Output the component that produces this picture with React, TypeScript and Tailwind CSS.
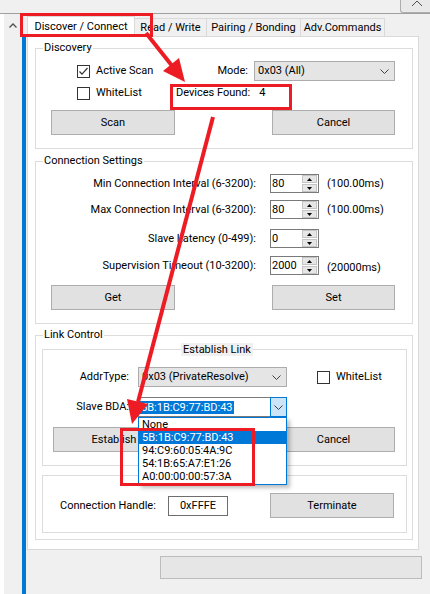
import React from "react";

function Chevron() {
  return (
    <svg width="9" height="5" viewBox="0 0 9 5">
      <polyline points="0.5,0.5 4.5,4.5 8.5,0.5" fill="none" stroke="#404040" strokeWidth="1" />
    </svg>
  );
}

function Checkbox({ checked }: { checked?: boolean }) {
  return (
    <div className="w-[13px] h-[13px] border border-[#333333] bg-white flex items-center justify-center shrink-0">
      {checked && (
        <svg width="11" height="11" viewBox="0 0 11 11">
          <polyline points="1.5,5.5 4,8.2 9.5,2" fill="none" stroke="#333333" strokeWidth="1.2" />
        </svg>
      )}
    </div>
  );
}

function Button({ label, className }: { label: string; className: string }) {
  return (
    <div className={`h-[25px] bg-[#e1e1e1] border border-[#adadad] flex items-center justify-center shrink-0 ${className}`}>
      {label}
    </div>
  );
}

function Combo({ text, className }: { text: string; className: string }) {
  return (
    <div className={`h-[20px] bg-[#e5e5e5] border border-[#acacac] flex items-center pl-[3px] pr-[5px] shrink-0 ${className}`}>
      <span className="flex-1 truncate">{text}</span>
      <Chevron />
    </div>
  );
}

function Spinner({ value }: { value: string }) {
  return (
    <div className="w-[49px] h-[19px] border border-[#7a7a7a] bg-white flex items-center shrink-0">
      <span className="flex-1 pl-[1px] leading-[17px]">{value}</span>
      <div className="w-[15px] h-[17px] mr-[1px] flex flex-col">
        <div className="h-[8px] mb-[1px] bg-[#e6e6e6] border border-[#c4c4c4] flex items-center justify-center">
          <svg width="5" height="3" viewBox="0 0 5 3">
            <polygon points="0,3 2.5,0 5,3" fill="#000" />
          </svg>
        </div>
        <div className="h-[8px] bg-[#e6e6e6] border border-[#c4c4c4] flex items-center justify-center">
          <svg width="5" height="3" viewBox="0 0 5 3">
            <polygon points="0,0 5,0 2.5,3" fill="#000" />
          </svg>
        </div>
      </div>
    </div>
  );
}

function SpinRow({ label, value, unit, mt, unitClass }: { label: string; value: string; unit?: string; mt: string; unitClass?: string }) {
  return (
    <div className={`h-[19px] flex items-center ${mt}`}>
      <span className="w-[220px] text-right shrink-0 whitespace-nowrap">{label}</span>
      <div className="ml-[14px]">
        <Spinner value={value} />
      </div>
      {unit && <span className={`ml-[8px] whitespace-nowrap ${unitClass ?? ""}`}>{unit}</span>}
    </div>
  );
}

export default function App() {
  const items = ["None", "5B:1B:C9:77:BD:43", "94:C9:60:05:4A:9C", "54:1B:65:A7:E1:26", "A0:00:00:00:57:3A"];
  return (
    <div className="relative w-[430px] h-[594px] overflow-hidden bg-[#f0f0f0] text-black text-[11px] leading-[14px] font-['Roboto','Liberation_Sans',sans-serif]">
      {/* top strip */}
      <div className="h-[14px] border-b border-[#a0a0a0] flex justify-end">
        <div className="w-[30px] h-[13px] border-l border-b border-[#adadad] rounded-bl-[3px] bg-[#e9e9e9] flex justify-center">
          <svg width="12" height="7" viewBox="0 0 12 7" className="ml-[2px]">
            <polyline points="1,6 6,1 11,6" fill="none" stroke="#505050" strokeWidth="1" />
          </svg>
        </div>
      </div>

      <div className="flex h-[580px]">
        <div className="w-[4px] bg-white" />
        <div className="w-[17px] flex justify-center pt-[9px]">
          <svg width="8" height="5" viewBox="0 0 8 5">
            <polyline points="0.5,4.5 4,1 7.5,4.5" fill="none" stroke="#505050" strokeWidth="1.3" />
          </svg>
        </div>
        <div className="w-[6px] pl-[1px] flex flex-col">
          <div className="h-[23px]" />
          <div className="flex-1 w-[4px] bg-[#0078d7]" />
        </div>

        <div className="w-[403px] flex flex-col">
          {/* tabs */}
          <div className="h-[22px] flex items-end">
            <div className="relative z-10 -mb-px w-[108px] h-[21px] bg-white border border-b-0 border-[#d9d9d9] flex items-center justify-center pb-[1px] whitespace-nowrap">
              Discover / Connect
            </div>
            <div className="w-[72px] h-[18px] bg-[#f0f0f0] border-t border-r border-[#d9d9d9] flex items-center justify-center whitespace-nowrap">
              Read / Write
            </div>
            <div className="w-[94px] h-[18px] bg-[#f0f0f0] border-t border-r border-[#d9d9d9] flex items-center justify-center whitespace-nowrap">
              Pairing / Bonding
            </div>
            <div className="w-[84px] h-[18px] bg-[#f0f0f0] border-t border-r border-[#d9d9d9] flex items-center justify-center whitespace-nowrap">
              Adv.Commands
            </div>
          </div>

          {/* panel */}
          <div className="w-[392px] bg-white border border-[#d9d9d9] pt-[4px] pb-[9px]">
            {/* Discovery */}
            <fieldset className="ml-[7px] mr-[5px] border border-[#dcdcdc] pb-[13px] min-w-0">
              <legend className="ml-[7px] px-[1px] leading-[14px]">Discovery</legend>
              <div className="mt-[6px] h-[20px] flex items-center">
                <div className="w-[212px] pl-[41px] flex items-center shrink-0">
                  <Checkbox checked />
                  <span className="ml-[6px]">Active Scan</span>
                  <span className="ml-auto">Mode:</span>
                </div>
                <Combo text="0x03 (All)" className="ml-[6px] w-[141px]" />
              </div>
              <div className="mt-[3px] h-[18px] flex items-center">
                <div className="w-[140px] pl-[41px] flex items-center shrink-0">
                  <Checkbox />
                  <span className="ml-[6px]">WhiteList</span>
                </div>
                <span>Devices Found:</span>
                <span className="ml-[9px]">4</span>
              </div>
              <div className="mt-[8px] flex">
                <Button label="Scan" className="ml-[15px] w-[124px]" />
                <Button label="Cancel" className="ml-[97px] w-[123px]" />
              </div>
            </fieldset>

            {/* Connection Settings */}
            <fieldset className="mt-[5px] ml-[7px] mr-[5px] border border-[#dcdcdc] pb-[13px] min-w-0">
              <legend className="ml-[7px] px-[1px] leading-[14px]">Connection Settings</legend>
              <SpinRow label="Min Connection Interval (6-3200):" value="80" unit="(100.00ms)" mt="mt-[6px]" />
              <SpinRow label="Max Connection Interval (6-3200):" value="80" unit="(100.00ms)" mt="mt-[7px]" />
              <SpinRow label="Slave Latency (0-499):" value="0" mt="mt-[10px]" />
              <SpinRow label="Supervision Timeout (10-3200):" value="2000" unit="(20000ms)" mt="mt-[8px]" unitClass="mt-[4px]" />
              <div className="mt-[10px] flex">
                <Button label="Get" className="ml-[15px] w-[124px]" />
                <Button label="Set" className="ml-[97px] w-[123px]" />
              </div>
            </fieldset>

            {/* Link Control */}
            <fieldset className="mt-[4px] ml-[7px] mr-[5px] border border-[#dcdcdc] pb-[6px] min-w-0">
              <legend className="ml-[7px] px-[1px] leading-[14px]">Link Control</legend>

              <fieldset className="mt-[1px] ml-[6px] mr-[5px] border border-[#dcdcdc] pb-[13px] min-w-0">
                <legend className="ml-[138px] bg-[#f0f0f0] leading-[13px]">
                  <span className="inline-block w-[72px] text-center">Establish Link</span>
                </legend>
                <div className="mt-[11px] h-[20px] flex items-center">
                  <span className="w-[86px] text-right shrink-0">AddrType:</span>
                  <Combo text="0x03 (PrivateResolve)" className="ml-[9px] w-[149px]" />
                  <div className="ml-[30px]">
                    <Checkbox />
                  </div>
                  <span className="ml-[6px]">WhiteList</span>
                </div>
                <div className="mt-[10px] h-[20px] flex items-center">
                  <span className="w-[86px] text-right shrink-0">Slave BDA:</span>
                  <div className="relative ml-[9px] w-[149px] h-[20px] border border-[#7a7a7a] bg-white flex items-center shrink-0">
                    <div className="flex-1 pl-[1px] flex items-center">
                      <span className="bg-[#0078d7] text-white leading-[13px] px-[1px]">5B:1B:C9:77:BD:43</span>
                    </div>
                    <div className="w-[17px] h-[20px] -mr-px border border-[#0078d7] bg-[#cce4f7] flex items-center justify-center">
                      <Chevron />
                    </div>
                    <div className="absolute left-[-1px] top-[19px] z-20 w-[149px] bg-white border border-[#0078d7] pb-[1px] shadow-[3px_3px_4px_rgba(0,0,0,0.25)]">
                      {items.map((it, i) => (
                        <div
                          key={it}
                          className={
                            i === 1
                              ? "h-[13px] leading-[13px] pl-[3px] bg-[#0078d7] text-white"
                              : "h-[13px] leading-[13px] pl-[3px]"
                          }
                        >
                          {it}
                        </div>
                      ))}
                    </div>
                  </div>
                </div>
                <div className="mt-[10px] flex">
                  <Button label="Establish" className="ml-[10px] w-[122px]" />
                  <Button label="Cancel" className="ml-[97px] w-[123px]" />
                </div>
              </fieldset>

              <fieldset className="mt-[9px] ml-[6px] mr-[5px] border border-[#dcdcdc] pb-[14px] min-w-0">
                <div className="mt-[17px] h-[25px] flex items-center">
                  <span className="ml-[17px] w-[108px] shrink-0 whitespace-nowrap">Connection Handle:</span>
                  <div className="w-[60px] h-[20px] border border-[#6e6e6e] flex items-center justify-center shrink-0">0xFFFE</div>
                  <Button label="Terminate" className="ml-[42px] w-[124px]" />
                </div>
              </fieldset>
            </fieldset>
          </div>

          <div className="mt-[6px] ml-[133px] w-[262px] h-[23px] bg-[#e6e6e6] border border-[#bcbcbc]" />
        </div>
      </div>

      {/* red annotations */}
      <svg className="absolute inset-0 pointer-events-none z-50" width="430" height="594" viewBox="0 0 430 594">
        <rect x="21.5" y="14.5" width="130" height="21" fill="none" stroke="#ed1c24" strokeWidth="3" />
        <rect x="171.5" y="85.5" width="119" height="23" fill="none" stroke="#ed1c24" strokeWidth="3" />
        <rect x="121.5" y="429.5" width="132" height="55" fill="none" stroke="#ed1c24" strokeWidth="3" />
        <line x1="146" y1="33" x2="173" y2="67" stroke="#ed1c24" strokeWidth="4" />
        <polygon points="185,82 163,71 179,58" fill="#ed1c24" />
        <line x1="213" y1="117" x2="138" y2="402" stroke="#ed1c24" strokeWidth="4" />
        <polygon points="132,424 148,404 127,399" fill="#ed1c24" />
      </svg>
    </div>
  );
}
